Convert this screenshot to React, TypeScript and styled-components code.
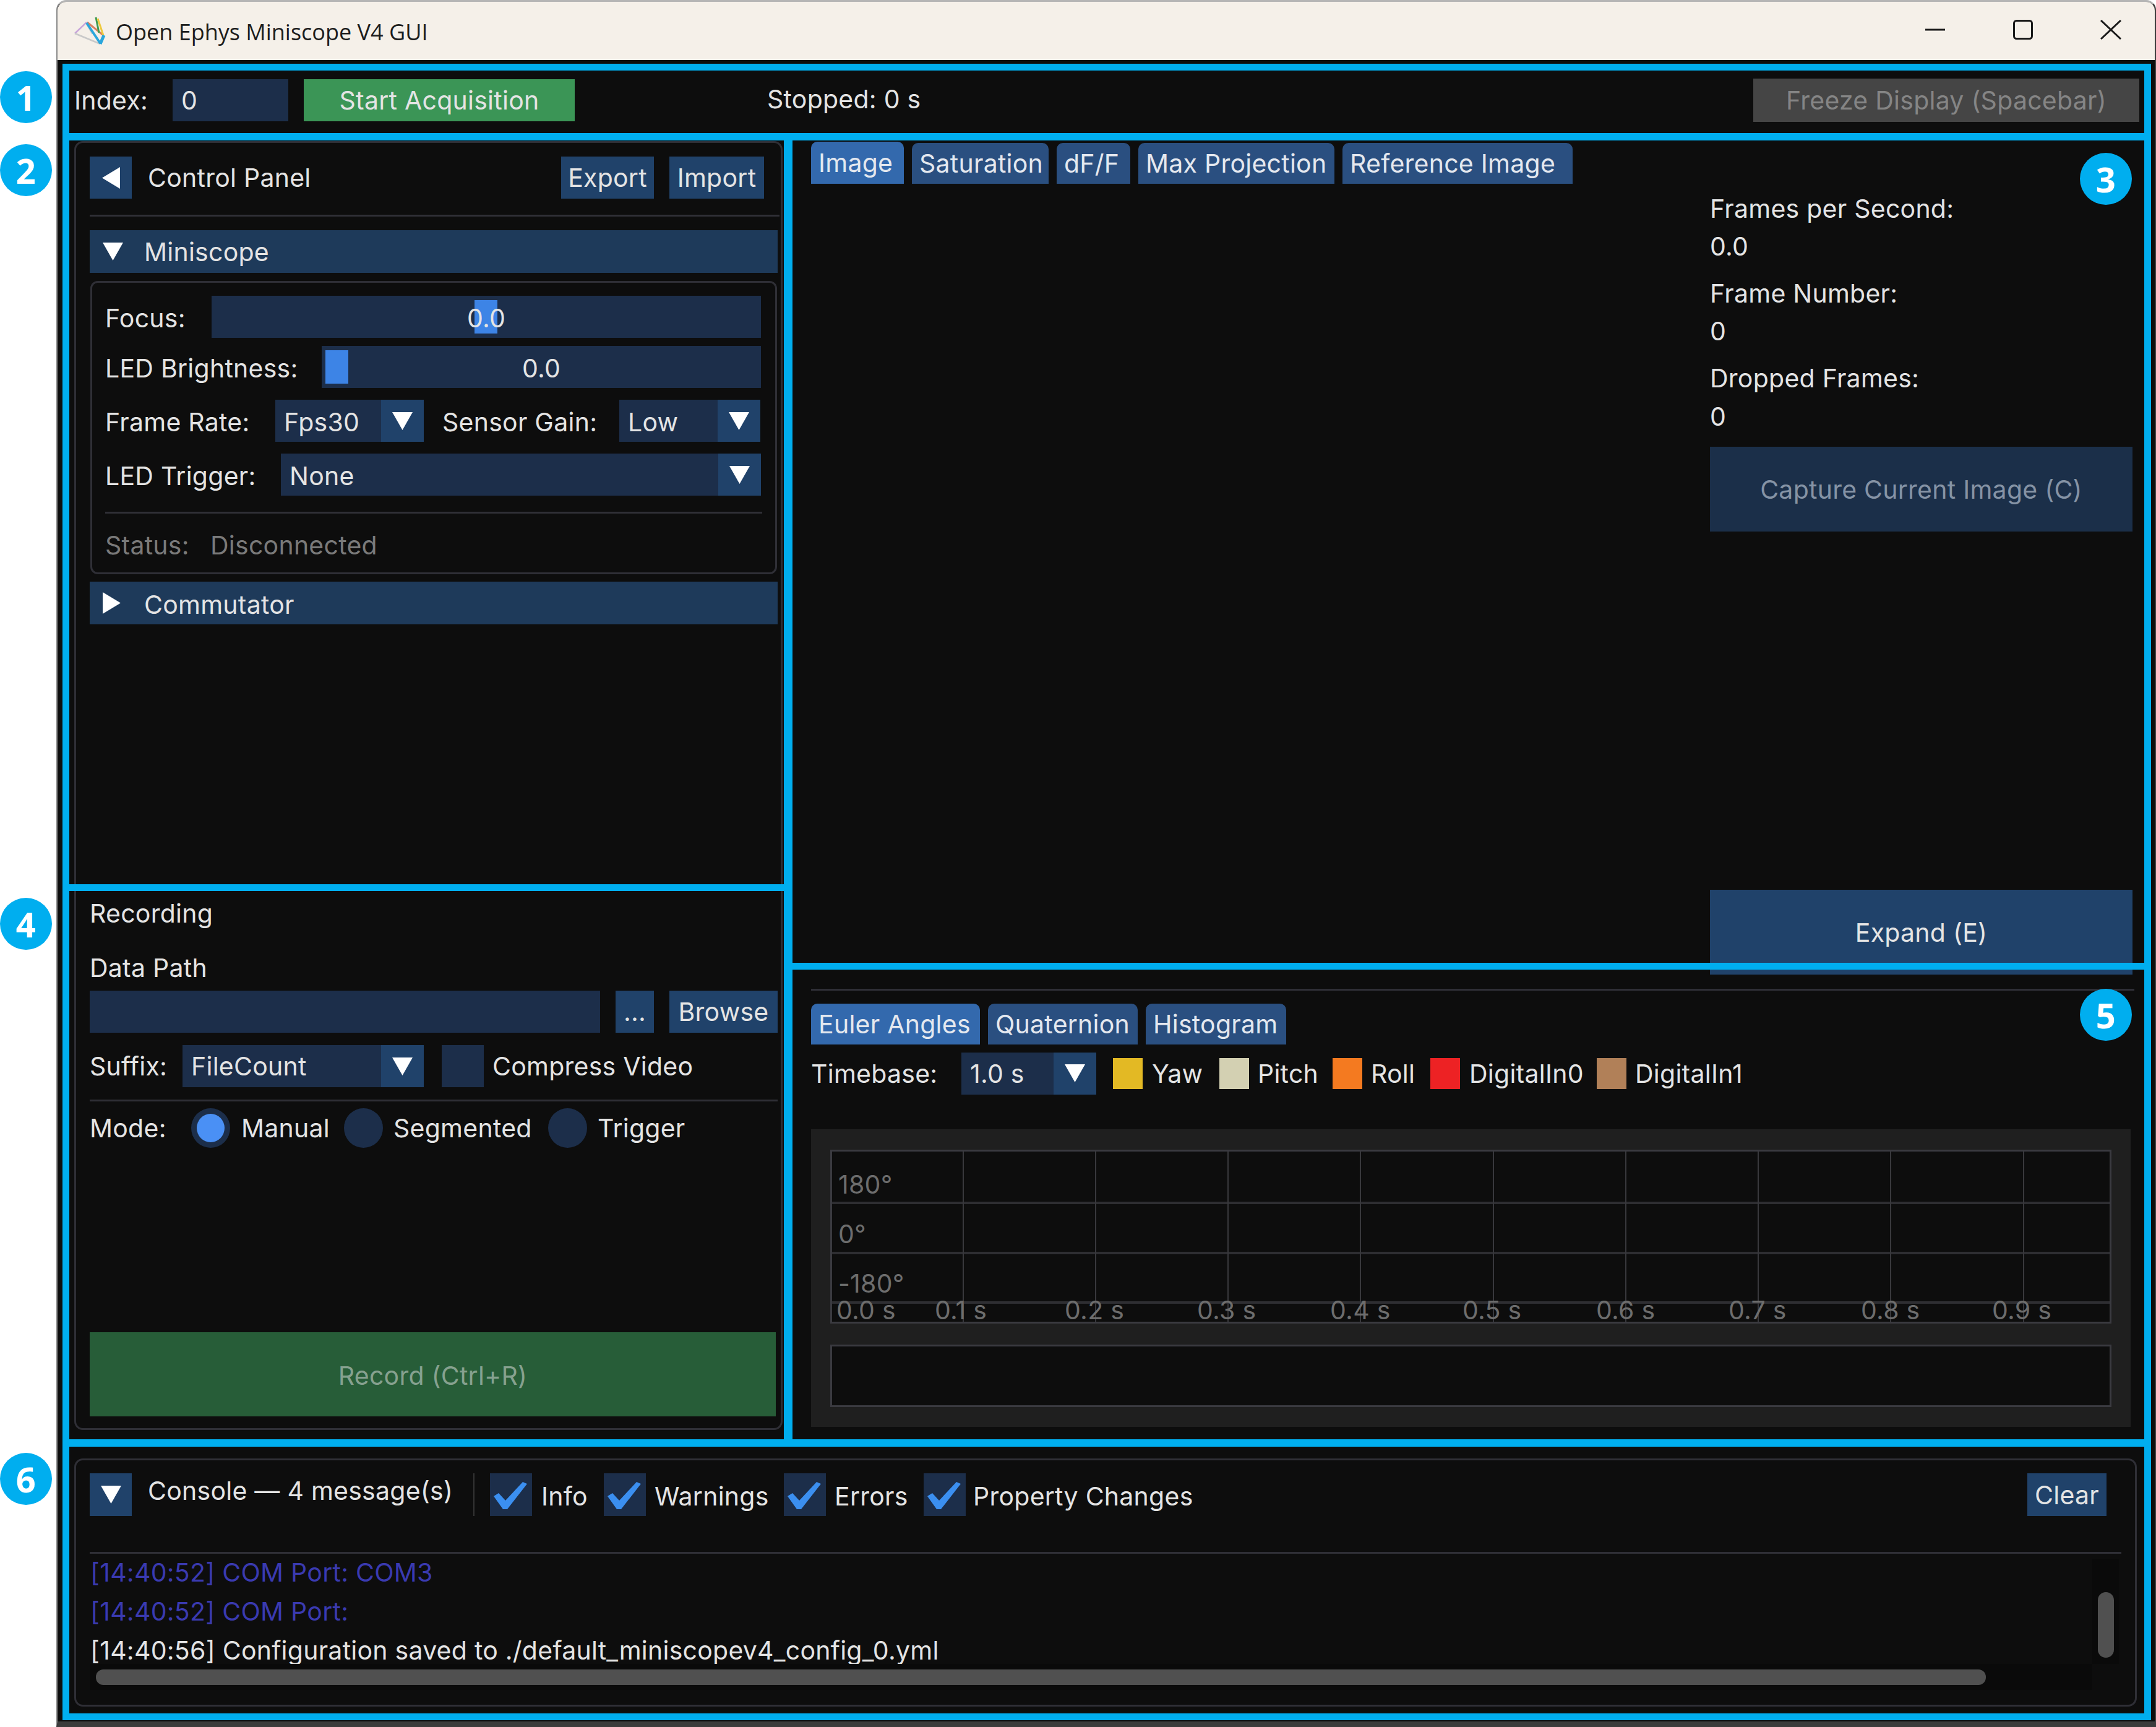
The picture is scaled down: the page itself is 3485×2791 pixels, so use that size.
import React from "react";
import styled, { createGlobalStyle } from "styled-components";

const Global = createGlobalStyle`
  html, body { margin: 0; padding: 0; background: #ffffff; }
  * { box-sizing: border-box; }
`;

const INTER = `Inter, "Liberation Sans", sans-serif`;
const C = {
  bg: "#0d0d0d",
  field: "#1c2e4a",
  btn: "#20426a",
  line: "#2f2f36",
  text: "#e4e4e4",
  tab: "#2a4f80",
  tabOn: "#3369ad",
};

const Page = styled.div`
  position: relative;
  width: 3485px;
  height: 2791px;
  background: #fff;
  overflow: hidden;
  font-family: ${INTER};
  font-size: 41px;
  letter-spacing: 0.25px;
  color: ${C.text};
`;

const Win = styled.div`
  margin-left: 91px;
  width: 3394px;
  height: 2791px;
  background: ${C.bg};
  border-left: 2px solid #8a8a8a;
  border-top: 3px solid #b5b5b5;
  border-bottom: 9px solid #3c3c3c;
  border-right: 2px solid #3c3c3c;
  border-top-left-radius: 16px;
  border-top-right-radius: 16px;
  display: flex;
  flex-direction: column;
`;

const TitleBar = styled.div`
  height: 94px;
  flex: none;
  background: #f5f0e9;
  border-top-left-radius: 14px;
  border-top-right-radius: 14px;
  display: flex;
  align-items: center;
  padding-left: 27px;
  color: #1d1d1d;
`;
const TitleText = styled.span`
  font-family: "Open Sans", "Noto Sans", sans-serif;
  font-size: 36px;
  letter-spacing: 0;
  margin-left: 15px;
  margin-top: 2px;
`;
const WinControls = styled.div`
  margin-left: auto;
  display: flex;
  margin-top: -4px;
`;
const WinBtn = styled.div`
  width: 142px;
  height: 44px;
  display: flex;
  align-items: center;
  justify-content: center;
`;

const Toolbar = styled.div`
  height: 130px;
  flex: none;
  display: flex;
  align-items: center;
  padding-left: 27px;
  padding-right: 25px;
`;
const Txt = styled.span<{ $w?: number; $ml?: number; $c?: string; $dy?: number }>`
  white-space: nowrap;
  flex: none;
  ${(p) => (p.$w ? `width:${p.$w}px;` : "")}
  ${(p) => (p.$ml ? `margin-left:${p.$ml}px;` : "")}
  ${(p) => (p.$c ? `color:${p.$c};` : "")}
  ${(p) => (p.$dy ? `transform:translateY(${p.$dy}px);` : "")}
`;
const Field = styled.div<{ $w?: number; $ml?: number }>`
  height: 68px;
  flex: ${(p) => (p.$w ? "none" : "1")};
  ${(p) => (p.$w ? `width:${p.$w}px;` : "")}
  ${(p) => (p.$ml ? `margin-left:${p.$ml}px;` : "")}
  background: ${C.field};
  display: flex;
  align-items: center;
  padding-left: 14px;
`;
const Btn = styled.div<{ $w?: number; $h?: number; $ml?: number; $bg?: string; $c?: string; $right?: boolean }>`
  flex: none;
  ${(p) => (p.$w ? `width:${p.$w}px;` : "")}
  height: ${(p) => p.$h ?? 68}px;
  ${(p) => (p.$ml ? `margin-left:${p.$ml}px;` : "")}
  ${(p) => (p.$right ? "margin-left:auto;" : "")}
  background: ${(p) => p.$bg ?? C.btn};
  color: ${(p) => p.$c ?? C.text};
  display: flex;
  align-items: center;
  justify-content: center;
  white-space: nowrap;
`;
const ClearBtn = styled(Btn)`
  margin-right: 26px;
`;

const Main = styled.div`
  height: 2105px;
  flex: none;
  display: flex;
  align-items: flex-start;
`;
const LeftPanel = styled.div`
  margin-left: 27px;
  margin-top: 1px;
  width: 1145px;
  height: 2083px;
  flex: none;
  border: 3px solid ${C.line};
  border-radius: 14px;
  padding-left: 22px;
  display: flex;
  flex-direction: column;
`;
const ControlSection = styled.div`
  height: 1209px;
  flex: none;
  padding-top: 22px;
  display: flex;
  flex-direction: column;
`;
const Row = styled.div<{ $mt?: number; $h?: number }>`
  display: flex;
  align-items: center;
  flex: none;
  height: ${(p) => p.$h ?? 68}px;
  margin-top: ${(p) => p.$mt ?? 0}px;
`;
const HeaderRow = styled(Row)`
  width: 1090px;
`;
const Sep = styled.div<{ $mt?: number; $w?: number }>`
  height: 3px;
  flex: none;
  background: ${C.line};
  margin-top: ${(p) => p.$mt ?? 0}px;
  width: ${(p) => p.$w ?? 1112}px;
`;
const Collapse = styled.div<{ $mt?: number }>`
  width: 1112px;
  height: 69px;
  flex: none;
  margin-top: ${(p) => p.$mt ?? 0}px;
  background: #1e3a5a;
  display: flex;
  align-items: center;
  padding-left: 21px;
`;
const Group = styled.div`
  width: 1110px;
  margin-left: 1px;
  margin-top: 13px;
  height: 474px;
  flex: none;
  border: 3px solid ${C.line};
  border-radius: 12px;
  padding: 21px 23px 0 21px;
  display: flex;
  flex-direction: column;
  span {
    position: relative;
    top: 2px;
  }
`;
const Track = styled.div`
  position: relative;
  height: 68px;
  flex: 1;
  background: ${C.field};
  display: flex;
  align-items: center;
  justify-content: center;
`;
const Grab = styled.div<{ $x: number }>`
  position: absolute;
  left: ${(p) => p.$x}px;
  top: 7px;
  bottom: 7px;
  width: 37px;
  background: #3d84e6;
`;
const ArrowBox = styled.div`
  width: 69px;
  height: 68px;
  margin-left: auto;
  flex: none;
  background: ${C.btn};
  display: flex;
  align-items: center;
  justify-content: center;
`;
const ComboField = styled(Field)`
  padding-right: 0;
`;
const Status = styled(Row)`
  color: #7a7a7a;
`;
const RecordingSection = styled.div`
  flex: 1;
  display: flex;
  flex-direction: column;
`;
const TextLine = styled.div<{ $mt?: number; $h?: number }>`
  height: 44px;
  line-height: 44px;
  flex: none;
  white-space: nowrap;
  margin-top: ${(p) => p.$mt ?? 0}px;
`;
const RadioDot = styled.div<{ $on?: boolean; $ml?: number }>`
  width: 63px;
  height: 64px;
  flex: none;
  border-radius: 50%;
  background: ${C.field};
  margin-left: ${(p) => p.$ml ?? 0}px;
  display: flex;
  align-items: center;
  justify-content: center;
  &::after {
    content: "";
    display: ${(p) => (p.$on ? "block" : "none")};
    width: 45px;
    height: 46px;
    border-radius: 50%;
    background: #4a90f5;
  }
`;
const RecordBtn = styled(Btn)`
  margin-top: auto;
  margin-bottom: 19px;
  padding-top: 4px;
  width: 1109px;
  height: 136px;
  background: #275d38;
  color: #86a18f;
`;

const RightCol = styled.div`
  flex: 1;
  padding-left: 46px;
  padding-right: 31px;
  display: flex;
  flex-direction: column;
`;
const UpperPane = styled.div`
  height: 1348px;
  flex: none;
  display: flex;
  justify-content: space-between;
`;
const Tabs = styled.div`
  display: flex;
  gap: 13px;
  align-items: flex-end;
  height: 70px;
  flex: none;
`;
const Tab = styled.div<{ $w: number; $on?: boolean; $h?: number }>`
  width: ${(p) => p.$w}px;
  height: ${(p) => p.$h ?? 66}px;
  background: ${(p) => (p.$on ? C.tabOn : C.tab)};
  border-radius: 10px 10px 0 0;
  display: flex;
  align-items: center;
  padding-left: 12px;
  white-space: nowrap;
  color: #e4e8ef;
`;
const Stats = styled.div`
  width: 683px;
  margin-right: 5px;
  flex: none;
  padding-top: 88px;
  display: flex;
  flex-direction: column;
`;
const WideBtn = styled(Btn)`
  width: 683px;
`;
const CaptureBtn = styled(WideBtn)`
  margin-top: 27px;
  height: 137px;
  background: #1b2f49;
  color: #8593a5;
`;
const ExpandBtn = styled(WideBtn)`
  margin-top: auto;
  height: 137px;
`;
const LowerPane = styled.div`
  display: flex;
  flex-direction: column;
`;
const LowerTabs = styled(Tabs)`
  margin-top: 21px;
  height: 66px;
`;
const Swatch = styled.div<{ $c: string; $ml: number }>`
  width: 48px;
  height: 50px;
  flex: none;
  background: ${(p) => p.$c};
  margin-left: ${(p) => p.$ml}px;
`;
const PlotFrame = styled.div`
  width: 2133px;
  height: 481px;
  margin-top: 57px;
  flex: none;
  background: #1f1f1f;
  padding: 33px 31px 0;
`;
const PlotArea = styled.div<{ $h: number; $mt?: number }>`
  width: 2071px;
  height: ${(p) => p.$h}px;
  margin-top: ${(p) => p.$mt ?? 0}px;
  background: ${C.bg};
  border: 3px solid #3a3a40;
  display: block;
  svg { display: block; overflow: visible; }
`;

const ConsoleSection = styled.div`
  flex: 1;
  padding: 25px 29px 0 27px;
`;
const ConsoleGroup = styled.div`
  height: 401px;
  border: 3px solid ${C.line};
  border-radius: 14px;
  padding: 21px 20px 0 22px;
  display: flex;
  flex-direction: column;
`;
const VSep = styled.div`
  width: 2px;
  height: 69px;
  flex: none;
  background: #333;
  margin-right: 25px;
`;
const CheckItem = styled.div<{ $w: number }>`
  width: ${(p) => p.$w}px;
  flex: none;
  display: flex;
  align-items: center;
`;
const CheckBox = styled.div`
  width: 68px;
  height: 69px;
  flex: none;
  background: ${C.field};
  display: flex;
  align-items: center;
  justify-content: center;
`;
const LogGrid = styled.div`
  display: grid;
  grid-template-columns: 3237px 43px;
  grid-template-rows: 170px 42px;
  margin-top: 8px;
`;
const LogLines = styled.div`
  margin-top: -9px;
  padding-left: 1px;
`;
const LogLine = styled.div<{ $c?: string }>`
  height: 63px;
  line-height: 63px;
  white-space: nowrap;
  color: ${(p) => p.$c ?? C.text};
`;
const VTrack = styled.div`
  background: #0a0a0a;
  padding: 54px 0 0 9px;
`;
const VThumb = styled.div`
  width: 26px;
  height: 106px;
  border-radius: 13px;
  background: #505050;
`;
const HTrack = styled.div`
  background: #0a0a0a;
  padding: 9px 0 0 10px;
`;
const HThumb = styled.div`
  width: 3055px;
  height: 25px;
  border-radius: 12px;
  background: #505050;
`;

const Frame = styled.div<{ $x: number; $y: number; $r: number; $b: number }>`
  position: absolute;
  left: ${(p) => p.$x}px;
  top: ${(p) => p.$y}px;
  width: ${(p) => p.$r - p.$x}px;
  height: ${(p) => p.$b - p.$y}px;
  border: 11px solid #00aeef;
  pointer-events: none;
`;
const Badge = styled.div<{ $x: number; $y: number }>`
  position: absolute;
  left: ${(p) => p.$x}px;
  top: ${(p) => p.$y}px;
  width: 84px;
  height: 84px;
  border-radius: 50%;
  background: #00aeef;
  color: #fff;
  font-family: "Open Sans", sans-serif;
  font-weight: 700;
  font-size: 56px;
  display: flex;
  align-items: center;
  justify-content: center;
`;

const Tri = ({ dir }: { dir: "down" | "left" | "right" }) => {
  if (dir === "down")
    return (
      <svg width="33" height="29" viewBox="0 0 33 29">
        <polygon points="0,0 33,0 16.5,29" fill="#fff" />
      </svg>
    );
  if (dir === "left")
    return (
      <svg width="29" height="35" viewBox="0 0 29 35">
        <polygon points="29,0 29,35 0,17.5" fill="#fff" />
      </svg>
    );
  return (
    <svg width="29" height="35" viewBox="0 0 29 35">
      <polygon points="0,0 0,35 29,17.5" fill="#fff" />
    </svg>
  );
};

const Check = () => (
  <svg width="68" height="69" viewBox="0 0 68 69">
    <polygon points="6,37 14,32 25,44 53,14 60,17 28,58 21,58" fill="#3b8ff0" />
  </svg>
);

const Logo = () => (
  <svg width="52" height="46" viewBox="35 24 52 46">
    <line x1="36" y1="51" x2="55" y2="33" stroke="#c8a6da" strokeWidth="2.5" />
    <line x1="36" y1="51" x2="77" y2="68" stroke="#c9c9c9" strokeWidth="2.5" />
    <line x1="55" y1="36" x2="64" y2="52" stroke="#d0d0d0" strokeWidth="2" />
    <line x1="56" y1="33" x2="82" y2="54" stroke="#d9805f" strokeWidth="3" />
    <line x1="70" y1="25" x2="75" y2="50" stroke="#3f9a4f" strokeWidth="3" />
    <line x1="73" y1="27" x2="82" y2="54" stroke="#eec93d" strokeWidth="3" />
    <line x1="55" y1="34" x2="77" y2="67" stroke="#2aa6dc" strokeWidth="4" />
    <line x1="83" y1="54" x2="77" y2="68" stroke="#2aa6dc" strokeWidth="5" />
  </svg>
);

const plotV = [212, 426, 640, 854, 1069, 1283, 1497, 1711, 1926];
const plotH = [83, 164, 244];
const yLabels: [string, number, number][] = [
  ["180°", 10, 53],
  ["0°", 10, 133],
  ["-180°", 10, 213],
];
const xLabels: [string, number][] = [
  ["0.0 s", 7],
  ["0.1 s", 166],
  ["0.2 s", 376],
  ["0.3 s", 590],
  ["0.4 s", 805],
  ["0.5 s", 1019],
  ["0.6 s", 1235],
  ["0.7 s", 1449],
  ["0.8 s", 1663],
  ["0.9 s", 1875],
];

const Plot = () => (
  <svg width="2065" height="275" viewBox="0 0 2065 275">
    {plotH.map((y) => (
      <line key={y} x1="0" x2="2065" y1={y} y2={y} stroke="#2e2e32" strokeWidth="4" />
    ))}
    {plotV.map((x) => (
      <line key={x} x1={x} x2={x} y1="0" y2="275" stroke="#38383c" strokeWidth="2" />
    ))}
    {yLabels.map(([t, x, y]) => (
      <text key={t} x={x} y={y} fill="#6d6d6d" fontFamily="Inter" fontSize="41" dominantBaseline="central">
        {t}
      </text>
    ))}
    {xLabels.map(([t, x]) => (
      <text key={t} x={x} y="256" fill="#6d6d6d" fontFamily="Inter" fontSize="41" dominantBaseline="central">
        {t}
      </text>
    ))}
  </svg>
);

const Combo = ({ w, ml, value }: { w?: number; ml?: number; value: string }) => (
  <ComboField $w={w} $ml={ml}>
    <span>{value}</span>
    <ArrowBox>
      <Tri dir="down" />
    </ArrowBox>
  </ComboField>
);

const frames = [
  [101, 103, 3477, 227],
  [101, 215, 1281, 1440],
  [1267, 215, 3477, 1567],
  [101, 1429, 1281, 2337],
  [1267, 1556, 3477, 2337],
  [101, 2327, 3477, 2780],
];
const badges: [string, number, number][] = [
  ["1", 0, 115],
  ["2", 0, 233],
  ["3", 3362, 247],
  ["4", 0, 1451],
  ["5", 3362, 1598],
  ["6", 0, 2348],
];

export default function App() {
  return (
    <Page>
      <Global />
      <Win>
        <TitleBar>
          <Logo />
          <TitleText>Open Ephys Miniscope V4 GUI</TitleText>
          <WinControls>
            <WinBtn>
              <svg width="34" height="4" viewBox="0 0 34 4">
                <line x1="1" y1="2" x2="33" y2="2" stroke="#1a1a1a" strokeWidth="3" />
              </svg>
            </WinBtn>
            <WinBtn>
              <svg width="32" height="32" viewBox="0 0 32 32">
                <rect x="1.5" y="1.5" width="29" height="29" rx="4" fill="none" stroke="#1a1a1a" strokeWidth="3" />
              </svg>
            </WinBtn>
            <WinBtn>
              <svg width="34" height="32" viewBox="0 0 34 32">
                <path d="M1 1 L33 31 M33 1 L1 31" fill="none" stroke="#1a1a1a" strokeWidth="3" />
              </svg>
            </WinBtn>
          </WinControls>
        </TitleBar>

        <Toolbar>
          <Txt $w={159}>Index:</Txt>
          <Field $w={187}>0</Field>
          <Btn $w={438} $ml={25} $bg="#3b9556">
            Start Acquisition
          </Btn>
          <Txt $ml={311} $dy={-2}>
            Stopped: 0 s
          </Txt>
          <Btn $w={624} $h={70} $right $bg="#454545" $c="#858585">
            Freeze Display (Spacebar)
          </Btn>
        </Toolbar>

        <Main>
          <LeftPanel>
            <ControlSection>
              <HeaderRow>
                <Btn $w={68}>
                  <Tri dir="left" />
                </Btn>
                <Txt $ml={26}>Control Panel</Txt>
                <Btn $w={150} $right>
                  Export
                </Btn>
                <Btn $w={153} $ml={25}>
                  Import
                </Btn>
              </HeaderRow>
              <Sep $mt={26} $w={1115} />
              <Collapse $mt={22}>
                <Tri dir="down" />
                <Txt $ml={34}>Miniscope</Txt>
              </Collapse>
              <Group>
                <Row>
                  <Txt $w={172}>Focus:</Txt>
                  <Track>
                    <Grab $x={425} />
                    <span>0.0</span>
                  </Track>
                </Row>
                <Row $mt={13}>
                  <Txt $w={350}>LED Brightness:</Txt>
                  <Track>
                    <Grab $x={6} />
                    <span>0.0</span>
                  </Track>
                </Row>
                <Row $mt={19}>
                  <Txt $w={275}>Frame Rate:</Txt>
                  <Combo w={240} value="Fps30" />
                  <Txt $w={286} $ml={30}>
                    Sensor Gain:
                  </Txt>
                  <Combo w={228} value="Low" />
                </Row>
                <Row $mt={19}>
                  <Txt $w={284}>LED Trigger:</Txt>
                  <Combo value="None" />
                </Row>
                <Sep $mt={26} $w={1062} />
                <Status $mt={15}>
                  <Txt $w={170}>Status:</Txt>
                  <Txt>Disconnected</Txt>
                </Status>
              </Group>
              <Collapse $mt={12}>
                <Tri dir="right" />
                <Txt $ml={38} $dy={2}>
                  Commutator
                </Txt>
              </Collapse>
            </ControlSection>

            <RecordingSection>
              <TextLine $mt={14}>Recording</TextLine>
              <TextLine $mt={44}>Data Path</TextLine>
              <Row $mt={15}>
                <Field $w={825} />
                <Btn $w={62} $ml={25}>
                  ...
                </Btn>
                <Btn $w={175} $ml={25}>
                  Browse
                </Btn>
              </Row>
              <Row $mt={20}>
                <Txt $w={150}>Suffix:</Txt>
                <Combo w={390} value="FileCount" />
                <Field $w={68} $ml={29} />
                <Txt $ml={14}>Compress Video</Txt>
              </Row>
              <Sep $mt={20} />
              <Row $mt={11} $h={64}>
                <Txt $w={164}>Mode:</Txt>
                <RadioDot $on />
                <Txt $w={166} $ml={18}>
                  Manual
                </Txt>
                <RadioDot />
                <Txt $w={250} $ml={17}>
                  Segmented
                </Txt>
                <RadioDot />
                <Txt $ml={17}>Trigger</Txt>
              </Row>
              <RecordBtn>Record (Ctrl+R)</RecordBtn>
            </RecordingSection>
          </LeftPanel>

          <RightCol>
            <UpperPane>
              <Tabs>
                <Tab $w={150} $on $h={68}>
                  Image
                </Tab>
                <Tab $w={221}>Saturation</Tab>
                <Tab $w={119}>dF/F</Tab>
                <Tab $w={317}>Max Projection</Tab>
                <Tab $w={372}>Reference Image</Tab>
              </Tabs>
              <Stats>
                <TextLine>Frames per Second:</TextLine>
                <TextLine $mt={17}>0.0</TextLine>
                <TextLine $mt={32}>Frame Number:</TextLine>
                <TextLine $mt={17}>0</TextLine>
                <TextLine $mt={32}>Dropped Frames:</TextLine>
                <TextLine $mt={18}>0</TextLine>
                <CaptureBtn>Capture Current Image (C)</CaptureBtn>
                <ExpandBtn>Expand (E)</ExpandBtn>
              </Stats>
            </UpperPane>
            <LowerPane>
              <Sep $mt={23} $w={2139} />
              <LowerTabs>
                <Tab $w={273} $on>
                  Euler Angles
                </Tab>
                <Tab $w={242}>Quaternion</Tab>
                <Tab $w={227}>Histogram</Tab>
              </LowerTabs>
              <Row $mt={13} $h={67}>
                <Txt $w={243}>Timebase:</Txt>
                <ComboField $w={218}>
                  <span>1.0 s</span>
                  <ArrowBox>
                    <Tri dir="down" />
                  </ArrowBox>
                </ComboField>
                <Swatch $c="#e3b924" $ml={27} />
                <Txt $w={109} $ml={15}>
                  Yaw
                </Txt>
                <Swatch $c="#d3d0b2" $ml={0} />
                <Txt $w={121} $ml={14}>
                  Pitch
                </Txt>
                <Swatch $c="#f47a20" $ml={0} />
                <Txt $w={96} $ml={14}>
                  Roll
                </Txt>
                <Swatch $c="#ed2224" $ml={0} />
                <Txt $w={206} $ml={15}>
                  DigitalIn0
                </Txt>
                <Swatch $c="#b18058" $ml={0} />
                <Txt $ml={14}>DigitalIn1</Txt>
              </Row>
              <PlotFrame>
                <PlotArea $h={281}>
                  <Plot />
                </PlotArea>
                <PlotArea $h={101} $mt={34} />
              </PlotFrame>
            </LowerPane>
          </RightCol>
        </Main>

        <ConsoleSection>
          <ConsoleGroup>
            <Row $h={69}>
              <Btn $w={68} $h={69}>
                <Tri dir="down" />
              </Btn>
              <Txt $ml={26} $w={526} $dy={-7}>
                Console — 4 message(s)
              </Txt>
              <VSep />
              <CheckItem $w={184}>
                <CheckBox>
                  <Check />
                </CheckBox>
                <Txt $ml={15} $dy={2}>
                  Info
                </Txt>
              </CheckItem>
              <CheckItem $w={291}>
                <CheckBox>
                  <Check />
                </CheckBox>
                <Txt $ml={14} $dy={2}>
                  Warnings
                </Txt>
              </CheckItem>
              <CheckItem $w={226}>
                <CheckBox>
                  <Check />
                </CheckBox>
                <Txt $ml={14} $dy={2}>
                  Errors
                </Txt>
              </CheckItem>
              <CheckItem $w={500}>
                <CheckBox>
                  <Check />
                </CheckBox>
                <Txt $ml={12} $dy={2}>
                  Property Changes
                </Txt>
              </CheckItem>
              <ClearBtn $w={128} $h={69} $right>
                Clear
              </ClearBtn>
            </Row>
            <Sep $mt={58} $w={3284} />
            <LogGrid>
              <LogLines>
                <LogLine $c="#3a3ab0">[14:40:52] COM Port: COM3</LogLine>
                <LogLine $c="#3a3ab0">[14:40:52] COM Port:</LogLine>
                <LogLine>[14:40:56] Configuration saved to ./default_miniscopev4_config_0.yml</LogLine>
              </LogLines>
              <VTrack>
                <VThumb />
              </VTrack>
              <HTrack>
                <HThumb />
              </HTrack>
            </LogGrid>
          </ConsoleGroup>
        </ConsoleSection>
      </Win>

      {frames.map(([x, y, r, b]) => (
        <Frame key={`${x}-${y}`} $x={x} $y={y} $r={r} $b={b} />
      ))}
      {badges.map(([n, x, y]) => (
        <Badge key={n} $x={x} $y={y}>
          {n}
        </Badge>
      ))}
    </Page>
  );
}
